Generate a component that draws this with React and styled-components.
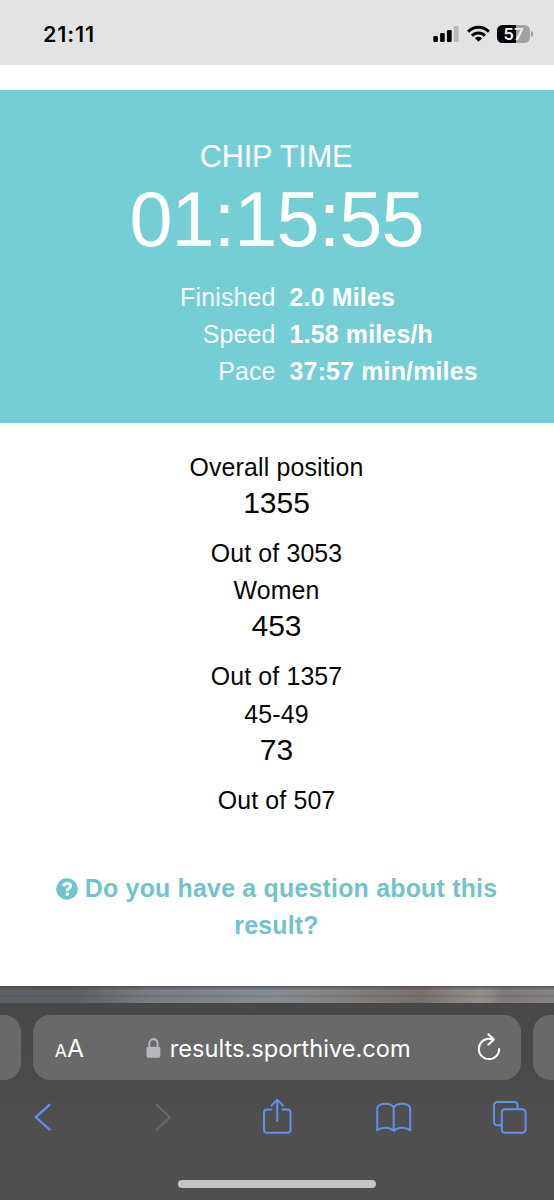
import React from "react";
import styled, { createGlobalStyle } from "styled-components";

const GlobalStyle = createGlobalStyle`
  * { box-sizing: border-box; }
  body { margin: 0; background: #fff; }
`;

const Screen = styled.div`
  display: flex;
  flex-direction: column;
  width: 554px;
  height: 1200px;
  overflow: hidden;
  background: #fff;
  font-family: "Liberation Sans", Arial, sans-serif;
`;

const StatusBar = styled.header`
  display: flex;
  align-items: center;
  justify-content: space-between;
  flex: none;
  height: 65px;
  padding: 3px 21px 0 43px;
  background: #e3e3e3;
`;

const Clock = styled.span`
  font: 600 21.6px/26px Inter, sans-serif;
  letter-spacing: 0.85px;
  color: #050505;
`;

const StatusIcons = styled.div`
  display: flex;
  align-items: center;
  gap: 7.5px;
`;

const Battery = styled.div`
  display: flex;
  align-items: center;
  gap: 1px;
`;

const BatteryBody = styled.div`
  width: 33px;
  height: 18px;
  border-radius: 5.5px;
  background: linear-gradient(90deg, #050505 58%, #a2a2a2 58%);
  color: #f2f2f2;
  font: 600 16.5px/18px Inter, sans-serif;
  text-align: center;
`;

const BatteryCap = styled.div`
  width: 2px;
  height: 6px;
  border-radius: 0 2px 2px 0;
  background: #a2a2a2;
`;

const Page = styled.main`
  flex: none;
  height: 921px;
  padding-top: 25.3px;
  text-align: center;
`;

const Hero = styled.section`
  height: 332.7px;
  padding-top: 42.3px;
  background: #75ced6;
  color: #fff;
`;

const HeroLabel = styled.div`
  padding-right: 2px;
  font-size: 30.6px;
  line-height: 46px;
  letter-spacing: -0.1px;
`;

const HeroTime = styled.div`
  margin-bottom: 20px;
  padding-right: 1px;
  font-size: 77.4px;
  line-height: 80px;
  letter-spacing: -0.9px;
`;

const Stat = styled.div`
  display: grid;
  grid-template-columns: 275.6px 1fr;
  column-gap: 14px;
  font-size: 24.9px;
  line-height: 37.2px;
  letter-spacing: 0.18px;
`;

const StatName = styled.span`
  text-align: right;
  opacity: 0.93;
`;

const StatValue = styled.strong`
  text-align: left;
`;

const Positions = styled.section`
  padding: 26px 1px 0 0;
  color: #080808;
`;

const Position = styled.div`
  height: 123.4px;
`;

const PositionText = styled.div`
  font-size: 24.9px;
  line-height: 37px;
  letter-spacing: 0.15px;
`;

const Rank = styled.div`
  margin-bottom: 15px;
  font-size: 30px;
  line-height: 34px;
`;

const Question = styled.a`
  display: block;
  margin-top: 51px;
  padding: 0 51px 0 50px;
  color: #73c3ca;
  font-size: 24.9px;
  font-weight: 700;
  line-height: 37px;
  letter-spacing: 0.22px;

  svg { vertical-align: -2.5px; }
`;

const BlurredPhoto = styled.div`
  flex: none;
  height: 17px;
  background:
    linear-gradient(180deg, rgba(60,60,62,.65), rgba(60,60,62,0) 25%, rgba(60,60,62,0) 52%, rgba(60,60,62,.25) 60%, rgba(60,60,62,0) 68%),
    linear-gradient(90deg, #5d6063 0, #5c5f63 13%, #777d82 27%, #858c92 50%, #817e7b 64%, #786f6b 76%, #8b8581 83%, #96908a 87%, #7e7a79 91%, #858382 100%);
`;

const Browser = styled.footer`
  display: flex;
  flex-direction: column;
  flex: none;
  height: 197px;
  padding-top: 12.3px;
  background: linear-gradient(180deg, #484849 0, #4a4a4b 40%, #505050 58%, #505050 100%);
`;

const TabStrip = styled.div`
  display: flex;
  gap: 12.3px;
  height: 64.7px;
`;

const SideTab = styled.div`
  flex: 1;
  background: #69696a;
  border-radius: ${(p) => (p.$right ? "17px 0 0 17px" : "0 17px 17px 0")};
`;

const AddressBar = styled.div`
  display: flex;
  align-items: center;
  width: 488.3px;
  padding: 1.5px 19px 0 22px;
  border-radius: 17px;
  background: #69696a;
  color: #fff;
  font-family: Inter, sans-serif;
`;

const TextSize = styled.span`
  width: 91px;
  padding-top: 2px;
  font-size: 24.6px;
  line-height: 30px;

  small { font-size: 17.5px; }
`;

const Address = styled.div`
  display: flex;
  flex: 1;
  align-items: center;
  gap: 9px;
  font-size: 23.6px;
  line-height: 30px;

  span { padding-top: 2px; }
`;

const Actions = styled.nav`
  display: flex;
  justify-content: space-between;
  padding: 17px 25px 0 23px;
`;

const HomeIndicator = styled.div`
  width: 198px;
  height: 8px;
  margin: 43.5px auto 0;
  border-radius: 4px;
  background: #c5c5c5;
`;

const ActionIcon = ({ color = "#648fe4", width = 2, children }) => (
  <svg width="40" height="40" viewBox="0 0 40 40" fill="none" stroke={color} strokeWidth={width} strokeLinecap="round" strokeLinejoin="round">
    {children}
  </svg>
);

const Signal = () => (
  <svg width="26" height="18" viewBox="0 0 26 18" fill="#050505">
    <rect x="0.3" y="11" width="4.6" height="6" rx="1.2" />
    <rect x="7.1" y="8" width="4.6" height="9" rx="1.2" />
    <rect x="13.9" y="5" width="4.8" height="12" rx="1.2" />
    <rect x="20.8" y="1" width="4.8" height="16" rx="1.2" fill="#b8b8b8" />
  </svg>
);

const Wifi = () => (
  <svg width="23" height="18" viewBox="0 0 23 18" fill="none" stroke="#050505" strokeWidth="3">
    <path d="M1.1 6.7C6.9.9 16.1.9 21.9 6.7" />
    <path d="M5 10.7C8.6 7.1 14.4 7.1 18 10.7" />
    <path d="M7.9 13.2C10 11.3 13 11.3 15.1 13.2L11.5 16.8Z" fill="#050505" stroke="none" />
  </svg>
);

const Help = () => (
  <svg width="22" height="22" viewBox="0 0 22 22" fill="none">
    <circle cx="11" cy="11" r="10.7" fill="#73c3ca" />
    <path d="M7.2 8.1C8 6.2 9.4 5.5 11.1 5.5C13.3 5.5 14.6 6.5 14.6 8.1C14.6 10.4 11.3 10.2 11.3 13" stroke="#fff" strokeWidth="3" />
    <path d="M9.8 14.6H12.9V17.7H9.8Z" fill="#fff" />
  </svg>
);

const Lock = () => (
  <svg width="15" height="20" viewBox="0 0 15 20" fill="none">
    <path d="M3.3 10V5.5C3.3-.2 11.5-.2 11.5 5.5V10" stroke="#b7b7bb" strokeWidth="1.8" />
    <rect x="0.5" y="8.7" width="13.8" height="11" rx="2" fill="#b7b7bb" />
  </svg>
);

const Reload = () => (
  <svg width="26" height="30" viewBox="0 0 26 30" fill="none" stroke="#fff" strokeWidth="2" strokeLinecap="round" strokeLinejoin="round">
    <path d="M16.5 6.3C15.4 5.9 14.2 5.7 13 5.7A10.2 10.2 0 1 0 23.2 15.9" />
    <path d="M12.4 1.2L17.8 6.5L12.3 11.8" />
  </svg>
);

const stats = [
  ["Finished", "2.0 Miles"],
  ["Speed", "1.58 miles/h"],
  ["Pace", "37:57 min/miles"],
];

const positions = [
  ["Overall position", "1355", "Out of 3053"],
  ["Women", "453", "Out of 1357"],
  ["45-49", "73", "Out of 507"],
];

export default function App() {
  return (
    <Screen>
      <GlobalStyle />
      <StatusBar>
        <Clock>21:11</Clock>
        <StatusIcons>
          <Signal />
          <Wifi />
          <Battery>
            <BatteryBody>57</BatteryBody>
            <BatteryCap />
          </Battery>
        </StatusIcons>
      </StatusBar>
      <Page>
        <Hero>
          <HeroLabel>CHIP TIME</HeroLabel>
          <HeroTime>01:15:55</HeroTime>
          {stats.map(([name, value]) => (
            <Stat key={name}>
              <StatName>{name}</StatName>
              <StatValue>{value}</StatValue>
            </Stat>
          ))}
        </Hero>
        <Positions>
          {positions.map(([group, rank, total]) => (
            <Position key={group}>
              <PositionText>{group}</PositionText>
              <Rank>{rank}</Rank>
              <PositionText>{total}</PositionText>
            </Position>
          ))}
        </Positions>
        <Question>
          <Help /> Do you have a question about this result?
        </Question>
      </Page>
      <BlurredPhoto />
      <Browser>
        <TabStrip>
          <SideTab />
          <AddressBar>
            <TextSize><small>A</small>A</TextSize>
            <Address>
              <Lock />
              <span>results.sporthive.com</span>
            </Address>
            <Reload />
          </AddressBar>
          <SideTab $right />
        </TabStrip>
        <Actions>
          <ActionIcon width={2.3}><path d="M26.5 7.8L12.8 20.2L26.5 32.5" /></ActionIcon>
          <ActionIcon width={2} color="#686868"><path d="M16.5 7.8L30 20.2L16.5 32.5" /></ActionIcon>
          <ActionIcon>
            <path d="M15.5 12.5H11A3 3 0 0 0 8 15.5V32.7A3 3 0 0 0 11 35.7H31.5A3 3 0 0 0 34.5 32.7V15.5A3 3 0 0 0 31.5 12.5H26.5" />
            <path d="M21.2 24V3M15.5 8.6L21.2 2.8L27 8.6" />
          </ActionIcon>
          <ActionIcon>
            <path d="M20.7 10.8C18.2 5.4 6.5 5.4 4.2 10.8V33.3C9.2 29.7 16.2 29.7 20.7 33.8C25.2 29.7 32.2 29.7 37.2 33.3V10.8C34.9 5.4 23.2 5.4 20.7 10.8V33.8" />
          </ActionIcon>
          <ActionIcon>
            <path d="M12 28.3H8.2A3.2 3.2 0 0 1 5 25.1V8.2A3.2 3.2 0 0 1 8.2 5H25.4A3.2 3.2 0 0 1 28.6 8.2V12" />
            <rect x="12.8" y="12.2" width="23.8" height="23.5" rx="3.2" />
          </ActionIcon>
        </Actions>
        <HomeIndicator />
      </Browser>
    </Screen>
  );
}
